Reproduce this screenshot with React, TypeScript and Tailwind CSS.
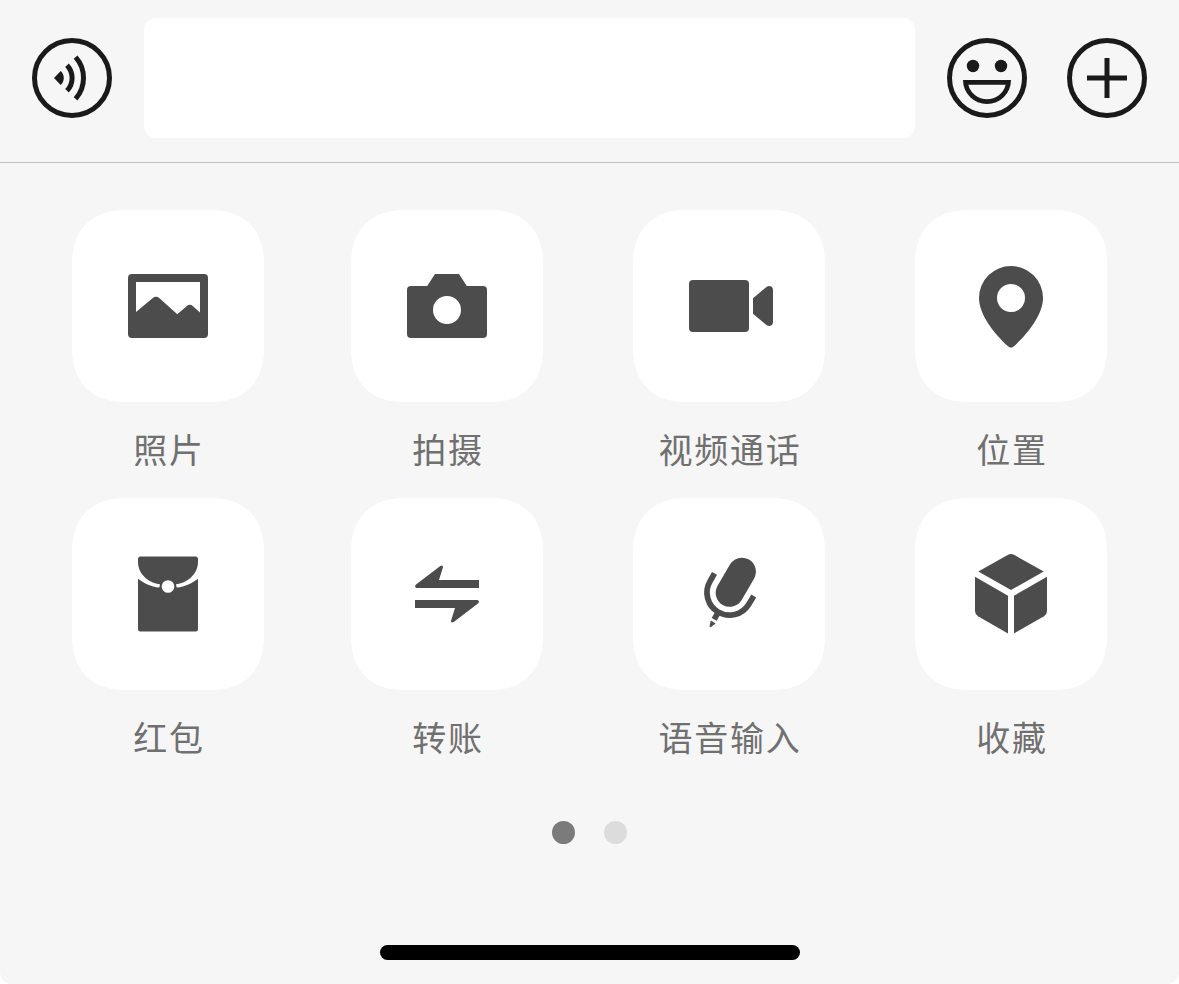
import React from "react";

type PanelAction = {
    label: string;
    icon: React.ReactNode;
};

type RoundButtonProps = {
    label: string;
    children: React.ReactNode;
};

const actions: PanelAction[] = [
    {
        label: "照片",
        icon: (
            <path
                fillRule="evenodd"
                d="M12 16H84a4 4 0 0 1 4 4V76a4 4 0 0 1-4 4H12a4 4 0 0 1-4-4V20a4 4 0 0 1 4-4ZM16 24V54L32.5 40.2Q36 37.4 39.5 40.2L57.3 56.3L66.6 48.2Q69.8 45.4 73 48.2L80 54.6V24Z"
            />
        ),
    },
    {
        label: "拍摄",
        icon: (
            <path
                fillRule="evenodd"
                d="M12 28H28.2L36 16H60L67.8 28H84a4 4 0 0 1 4 4V76a4 4 0 0 1-4 4H12a4 4 0 0 1-4-4V32a4 4 0 0 1 4-4ZM48 38a14 14 0 1 0 0 28a14 14 0 1 0 0-28Z"
            />
        ),
    },
    {
        label: "视频通话",
        icon: (
            <>
                <rect x="8" y="22" width="60" height="52" rx="4" />
                <path d="M72 40.2L85.4 29Q87 28 88.6 28Q92 28.4 92 32V64Q92 67.6 88.6 68Q87 68 85.4 67L72 55.8Z" />
            </>
        ),
    },
    {
        label: "位置",
        icon: (
            <path
                fillRule="evenodd"
                d="M16 40a32 32 0 0 1 64 0C80 56 66 74.5 51 88.3Q48 91 45 88.3C30 74.5 16 56 16 40ZM48 26a14 14 0 1 0 0 28a14 14 0 1 0 0-28Z"
            />
        ),
    },
    {
        label: "红包",
        icon: (
            <>
                <rect x="18" y="10.4" width="60" height="75.2" rx="2.5" />
                <path
                    fill="#fff"
                    d="M17.5 15.7H18C18 29 30 37.2 40 38.3L39.3 41.6C31 40.5 23.5 37 18 32.7H17.5ZM78.5 15.7H78C78 29 66 37.2 56 38.3L56.7 41.6C65 40.5 72.5 37 78 32.7H78.5Z"
                />
                <circle cx="48" cy="40.5" r="6.3" fill="#fff" />
            </>
        ),
    },
    {
        label: "转账",
        icon: (
            <>
                <path d="M80 42H17.4Q14.9 40.4 17 38.4L41.3 20Q44.5 18.6 43.9 21.6L40 34H80Z" />
                <path d="M80 42H17.4Q14.9 40.4 17 38.4L41.3 20Q44.5 18.6 43.9 21.6L40 34H80Z" transform="rotate(180 48 48)" />
            </>
        ),
    },
    {
        label: "语音输入",
        icon: (
            <>
                <path d="M60.9 25.7L48.7 46.8" fill="none" stroke="currentColor" strokeWidth="28" strokeLinecap="round" />
                <path d="M33.5 27.3L29.2 35A22.3 22.3 0 0 0 67.8 58.2L72.8 50" fill="none" stroke="currentColor" strokeWidth="5.7" />
                <path d="M36.8 67L33.2 73.4" fill="none" stroke="currentColor" strokeWidth="5.7" />
                <path d="M29.8 74.6L34.6 77.4L30 81Q28.5 81.6 28.6 80Z" />
            </>
        ),
    },
    {
        label: "收藏",
        icon: (
            <>
                <path d="M15.3 25.4L45.5 8.5Q48 7.3 50.5 8.5L80.7 25.4L48 44Z" />
                <path d="M12 30.7L45 49.7V87.4L15 70.2Q12 68.2 12 65Z" />
                <path d="M84 30.7L51 49.7V87.4L81 70.2Q84 68.2 84 65Z" />
            </>
        ),
    },
];

const RoundButton: React.FC<RoundButtonProps> = ({ label, children }) => (
    <button type="button" aria-label={label} className="size-20 shrink-0 text-[#1a1a1a]">
        <svg viewBox="0 0 80 80" className="size-20" fill="none" stroke="currentColor" strokeWidth="5">
            <circle cx="40" cy="40" r="37.5" />
            {children}
        </svg>
    </button>
);

const ActionTile: React.FC<PanelAction> = ({ label, icon }) => (
    <button type="button" className="flex h-72 w-48 flex-col items-center">
        <span className="flex size-48 items-center justify-center rounded-[54px] bg-white text-[#4c4c4c] [corner-shape:superellipse(1.2)]">
            <svg viewBox="0 0 96 96" className="size-24" fill="currentColor">
                {icon}
            </svg>
        </span>
        <span className="mt-[23px] -mr-0.5 text-[34px] leading-[48px] tracking-[1.7px] whitespace-nowrap text-[#707070]">
            {label}
        </span>
    </button>
);

export default function App() {
    return (
        <div className="h-[984px] w-[1179px] bg-white font-['Noto_Sans_CJK_SC',sans-serif]">
            <div className="flex h-full flex-col overflow-hidden rounded-b-xl bg-[#f6f6f6]">
                <div className="flex h-[163px] shrink-0 items-start border-b border-[#c0c0c0] px-8 pt-[18px]">
                    <div className="flex h-[120px] w-full items-center">
                        <RoundButton label="语音">
                            <path d="M22 40L28.7 33A9.5 9.5 0 0 1 28.7 47Z" fill="currentColor" stroke="none" />
                            <path d="M35 27.2A18.6 18.6 0 0 1 35 52.8" />
                            <path d="M43.6 19.2A31.3 31.3 0 0 1 43.6 60.8" />
                        </RoundButton>
                        <input
                            type="text"
                            aria-label="消息"
                            className="ml-8 h-[120px] min-w-0 flex-1 rounded-xl bg-white px-6 text-4xl outline-none"
                        />
                        <div className="ml-8 flex gap-10">
                            <RoundButton label="表情">
                                <g fill="currentColor" stroke="none">
                                    <circle cx="26" cy="28" r="6.2" />
                                    <circle cx="54" cy="28" r="6.2" />
                                    <path
                                        fillRule="evenodd"
                                        d="M16 42H64A24 24 0 0 1 16 42ZM21.3 46.8A19.3 19.3 0 0 0 58.7 46.8Z"
                                    />
                                </g>
                            </RoundButton>
                            <RoundButton label="更多">
                                <path d="M20 40H60M40 20V60" />
                            </RoundButton>
                        </div>
                    </div>
                </div>

                <div className="grid grid-cols-[279px_282px_282px_192px] pt-[47px] pl-[72px]">
                    {actions.map((action) => (
                        <ActionTile key={action.label} {...action} />
                    ))}
                </div>

                <div className="mt-[35px] flex justify-center gap-[29px]">
                    <span className="size-[23px] rounded-full bg-[#7b7b7b]" />
                    <span className="size-[23px] rounded-full bg-[#dcdcdc]" />
                </div>

                <div className="mx-auto mt-auto mb-6 h-[15px] w-[420px] rounded-full bg-black" />
            </div>
        </div>
    );
}
